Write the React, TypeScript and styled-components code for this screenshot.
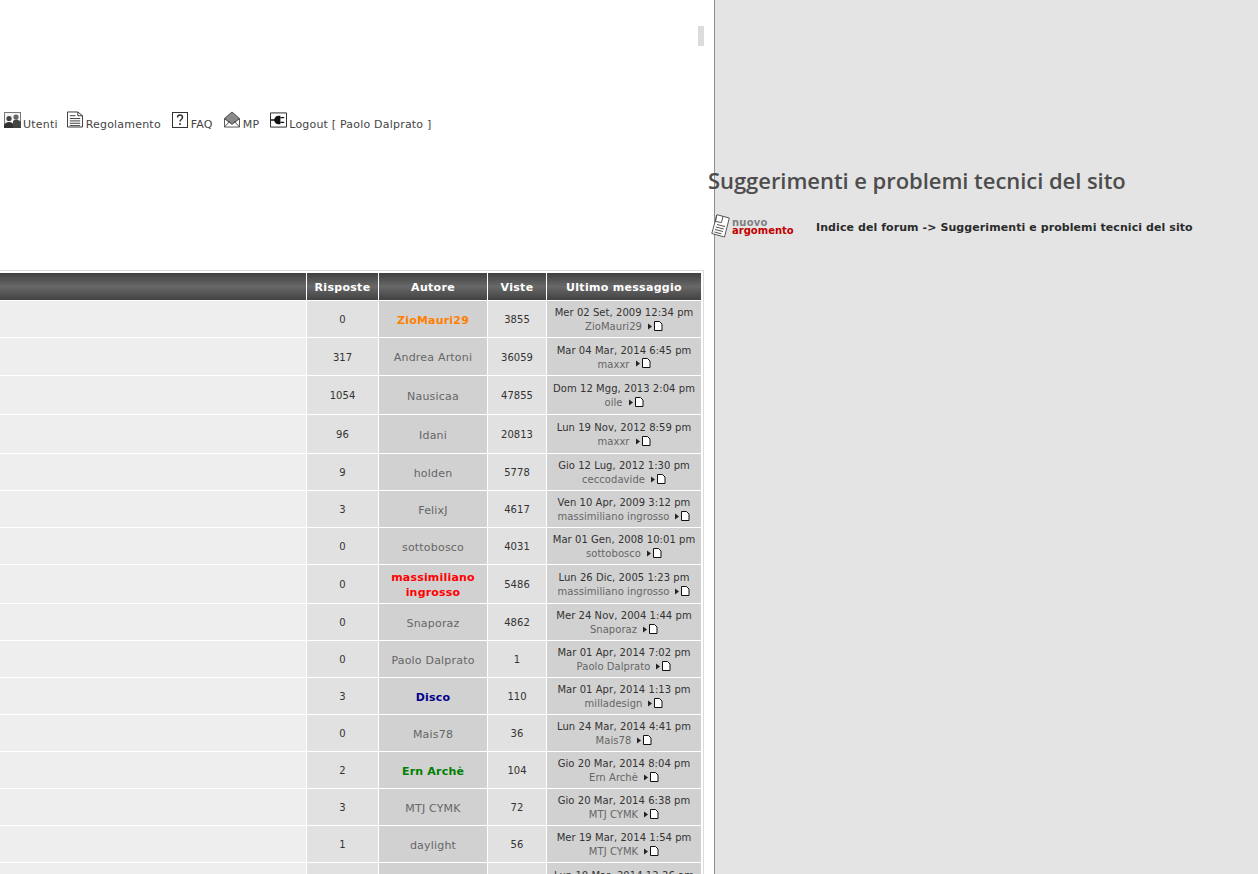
import styled, { createGlobalStyle } from "styled-components";

interface TopicRow {
  replies: number | string;
  author: string;
  authorColor?: string;
  views: number | string;
  date: string;
  lastBy: string;
  height: number;
}

const rows: TopicRow[] = [
  { replies: 0, author: "ZioMauri29", authorColor: "#ff7f00", views: 3855, date: "Mer 02 Set, 2009 12:34 pm", lastBy: "ZioMauri29", height: 36 },
  { replies: 317, author: "Andrea Artoni", views: 36059, date: "Mar 04 Mar, 2014 6:45 pm", lastBy: "maxxr", height: 37 },
  { replies: 1054, author: "Nausicaa", views: 47855, date: "Dom 12 Mgg, 2013 2:04 pm", lastBy: "oile", height: 38 },
  { replies: 96, author: "Idani", views: 20813, date: "Lun 19 Nov, 2012 8:59 pm", lastBy: "maxxr", height: 38 },
  { replies: 9, author: "holden", views: 5778, date: "Gio 12 Lug, 2012 1:30 pm", lastBy: "ceccodavide", height: 36 },
  { replies: 3, author: "FelixJ", views: 4617, date: "Ven 10 Apr, 2009 3:12 pm", lastBy: "massimiliano ingrosso", height: 36 },
  { replies: 0, author: "sottobosco", views: 4031, date: "Mar 01 Gen, 2008 10:01 pm", lastBy: "sottobosco", height: 36 },
  { replies: 0, author: "massimiliano ingrosso", authorColor: "#ff0000", views: 5486, date: "Lun 26 Dic, 2005 1:23 pm", lastBy: "massimiliano ingrosso", height: 38 },
  { replies: 0, author: "Snaporaz", views: 4862, date: "Mer 24 Nov, 2004 1:44 pm", lastBy: "Snaporaz", height: 36 },
  { replies: 0, author: "Paolo Dalprato", views: 1, date: "Mar 01 Apr, 2014 7:02 pm", lastBy: "Paolo Dalprato", height: 36 },
  { replies: 3, author: "Disco", authorColor: "#00008b", views: 110, date: "Mar 01 Apr, 2014 1:13 pm", lastBy: "milladesign", height: 36 },
  { replies: 0, author: "Mais78", views: 36, date: "Lun 24 Mar, 2014 4:41 pm", lastBy: "Mais78", height: 36 },
  { replies: 2, author: "Ern Archè", authorColor: "#008000", views: 104, date: "Gio 20 Mar, 2014 8:04 pm", lastBy: "Ern Archè", height: 36 },
  { replies: 3, author: "MTJ CYMK", views: 72, date: "Gio 20 Mar, 2014 6:38 pm", lastBy: "MTJ CYMK", height: 36 },
  { replies: 1, author: "daylight", views: 56, date: "Mer 19 Mar, 2014 1:54 pm", lastBy: "MTJ CYMK", height: 36 },
  { replies: "", author: "", views: "", date: "Lun 10 Mar, 2014 12:26 am", lastBy: "", height: 36 },
];

const GlobalStyle = createGlobalStyle`
  html, body {
    margin: 0;
    padding: 0;
    height: 874px;
    overflow: hidden;
    background: #e4e4e4;
    font-family: "DejaVu Sans", Verdana, sans-serif;
  }
`;

const Page = styled.div`
  display: flex;
  width: 1258px;
  height: 874px;
  overflow: hidden;
`;

const LeftPanel = styled.div`
  width: 714px;
  height: 874px;
  flex: none;
  background: #fff;
  border-right: 1px solid #8f8f8f;
  overflow: hidden;
`;

const ScrollThumb = styled.div`
  width: 6px;
  height: 20px;
  margin: 26px 0 0 698px;
  background: #dcdcdc;
`;

const NavBar = styled.nav`
  display: flex;
  align-items: flex-end;
  height: 20px;
  margin: 65px 0 0 4px;
`;

const NavItem = styled.a<{ $gap: number; $iconGap: number }>`
  display: flex;
  align-items: flex-end;
  gap: ${({ $iconGap }) => $iconGap}px;
  margin-right: ${({ $gap }) => $gap}px;
  color: #444;
  font-size: 11px;
  letter-spacing: 0.2px;
  line-height: 13px;
  white-space: pre;

  svg {
    margin-bottom: 3px;
  }
`;

const TableFrame = styled.div`
  width: 704px;
  margin-top: 139px;
  padding: 2px 0 0;
  border-top: 1px solid #dcdcdc;
  border-right: 1px solid #dcdcdc;
  box-sizing: border-box;
`;

const Topics = styled.table`
  width: 702px;
  margin-left: -1px;
  table-layout: fixed;
  border-collapse: separate;
  border-spacing: 0;
`;

const HeadCell = styled.th<{ $width?: number }>`
  width: ${({ $width }) => ($width ? `${$width}px` : "auto")};
  height: 26px;
  padding: 1px 0 0;
  box-sizing: content-box;
  border-left: 1px solid #fff;
  border-bottom: 1px solid #fff;
  background: linear-gradient(#404040, #686868 50%, #424242);
  color: #fff;
  font-size: 11px;
  font-weight: bold;
  letter-spacing: 0.3px;
  text-align: center;
`;

const Row = styled.tr<{ $height: number }>`
  height: ${({ $height }) => $height}px;
`;

const Cell = styled.td<{ $shade: string }>`
  padding: 2px 0 0;
  border-left: 1px solid #fff;
  border-bottom: 1px solid #fff;
  background: ${({ $shade }) => $shade};
  color: #333;
  font-size: 10px;
  letter-spacing: 0.05px;
  line-height: 14px;
  text-align: center;
`;

const Author = styled.span<{ $color?: string }>`
  display: block;
  color: ${({ $color }) => $color || "#666"};
  font-size: 11px;
  font-weight: ${({ $color }) => ($color ? "bold" : "normal")};
  line-height: 15px;
  letter-spacing: 0.2px;
  padding: 0 4px;
`;

const LastBy = styled.span`
  display: flex;
  justify-content: center;
  align-items: center;
  gap: 6px;
  color: #666;

  svg {
    margin-bottom: 3px;
  }
`;

const RightPanel = styled.main`
  flex: 1;
  min-width: 0;
`;

const Title = styled.h1`
  margin: 167px 0 0 -7px;
  color: #4d4d4d;
  font-family: "Open Sans", sans-serif;
  font-size: 22px;
  font-weight: 600;
  letter-spacing: -0.05px;
  line-height: 26px;
  white-space: nowrap;
`;

const ActionRow = styled.div`
  display: flex;
  align-items: center;
  margin: 21px 0 0 -4px;
`;

const NewTopic = styled.a`
  display: flex;
  align-items: center;
  gap: 2px;
  width: 105px;
  flex: none;
`;

const NewTopicLabel = styled.span`
  display: flex;
  flex-direction: column;
  padding-top: 1px;
  font-weight: bold;
  font-size: 10px;
  line-height: 8px;
`;

const LabelTop = styled.span`
  color: #808080;
  letter-spacing: 0.2px;
`;

const LabelBottom = styled.span`
  color: #c40000;
`;

const Breadcrumb = styled.div`
  padding-top: 2px;
  color: #2b2b2b;
  font-size: 11px;
  font-weight: bold;
  letter-spacing: 0.08px;
  white-space: nowrap;
`;

const UsersIcon = () => (
  <svg width="17" height="16" viewBox="0 0 17 16">
    <rect x="0.5" y="0.5" width="16" height="15" fill="#f4f4f4" stroke="#777" />
    <circle cx="5" cy="6.500" r="2.600" fill="#444" />
    <circle cx="12" cy="5" r="2.600" fill="#666" />
    <path d="M0 16v-3c1-2 3-3 5-3s4 1 5 3v3z" fill="#333" />
    <path d="M9 9c1-1 2-1.500 3-1.500s3 .5 5 2.500v6H9z" fill="#444" />
  </svg>
);

const RulesIcon = () => (
  <svg width="16" height="17" viewBox="0 0 17 17" fill="none" stroke="#333">
    <path d="M.5.5h11l5 4v12H.5z" fill="#fff" />
    <path d="M11.500.5v4h5M3 4.500h6M3 7.500h11M3 10h11M3 12.500h11M3 15h11" />
  </svg>
);

const FaqIcon = () => (
  <svg width="16" height="16" viewBox="0 0 16 16">
    <rect x="0.5" y="0.500" width="15" height="15" fill="#fff" stroke="#333" />
    <path d="M5.500 5.500c0-3.500 5-3.500 5 0 0 2-2.500 2-2.500 4M8 11v2" fill="none" stroke="#333" strokeWidth="1.500" />
  </svg>
);

const MailIcon = () => (
  <svg width="16" height="17" viewBox="0 0 17 17">
    <path d="M.5 7.500 8.500.5l8 7v9H.5z" fill="#8a8a8a" stroke="#444" />
    <path d="M1 16V8.500l7.500 5.500 7.500-5.500V16z" fill="#fff" />
    <path d="M.5 16.500l5.500-6M16.500 16.500 11 10.500M.5 7.500l8 6 8-6" fill="none" stroke="#444" />
  </svg>
);

const LogoutIcon = () => (
  <svg width="17" height="16" viewBox="0 0 18 16">
    <path d="M.5.5h17v15H.5z" fill="#fff" stroke="#222" />
    <path d="M9 3.500a4.500 4.500 0 0 0 0 9h2v-9z" fill="#111" />
    <path d="M1 8h5M11 5.500h4M11 10.500h4" stroke="#111" strokeWidth="1.500" />
  </svg>
);

const LatestIcon = () => (
  <svg width="15" height="10" viewBox="0 0 15 10">
    <path d="M0 2.500 4 5.500 0 8.500z" fill="#222" />
    <path d="M6.500.5h5l2.500 2.500v6.500H6.500z" fill="#fff" stroke="#111" />
  </svg>
);

const NewTopicIcon = () => (
  <svg width="19" height="24" viewBox="0 0 19 24" fill="none" stroke="#555">
    <path d="M6 .7 18.300 4 13.500 23 .8 19.500z" fill="#fff" />
    <path d="M5.500 1 4.500 7.500l6 1L12 2M6 10.500l8 2M4.800 13l8 2M4 15.500l8 2M3.300 18l7 1.800" />
  </svg>
);

export default function App() {
  return (
    <>
      <GlobalStyle />
      <Page>
        <LeftPanel>
          <ScrollThumb />
          <NavBar>
            <NavItem $gap={9} $iconGap={2}><UsersIcon />Utenti</NavItem>
            <NavItem $gap={11} $iconGap={3}><RulesIcon />Regolamento</NavItem>
            <NavItem $gap={11} $iconGap={3}><FaqIcon />FAQ</NavItem>
            <NavItem $gap={11} $iconGap={3}><MailIcon />MP</NavItem>
            <NavItem $gap={0} $iconGap={2}><LogoutIcon />Logout [ Paolo Dalprato ]</NavItem>
          </NavBar>
          <TableFrame>
            <Topics>
              <thead>
                <tr>
                  <HeadCell />
                  <HeadCell $width={71}>Risposte</HeadCell>
                  <HeadCell $width={108}>Autore</HeadCell>
                  <HeadCell $width={58}>Viste</HeadCell>
                  <HeadCell $width={154}>Ultimo messaggio</HeadCell>
                </tr>
              </thead>
              <tbody>
                {rows.map((row) => (
                  <Row key={row.date} $height={row.height + 1}>
                    <Cell $shade="#eeeeee" />
                    <Cell $shade="#e1e1e1">{row.replies}</Cell>
                    <Cell $shade="#d1d1d1">
                      <Author $color={row.authorColor}>{row.author}</Author>
                    </Cell>
                    <Cell $shade="#e1e1e1">{row.views}</Cell>
                    <Cell $shade="#d1d1d1">
                      {row.date}
                      <LastBy>
                        {row.lastBy}
                        <LatestIcon />
                      </LastBy>
                    </Cell>
                  </Row>
                ))}
              </tbody>
            </Topics>
          </TableFrame>
        </LeftPanel>
        <RightPanel>
          <Title>Suggerimenti e problemi tecnici del sito</Title>
          <ActionRow>
            <NewTopic>
              <NewTopicIcon />
              <NewTopicLabel>
                <LabelTop>nuovo</LabelTop>
                <LabelBottom>argomento</LabelBottom>
              </NewTopicLabel>
            </NewTopic>
            <Breadcrumb>Indice del forum -&gt; Suggerimenti e problemi tecnici del sito</Breadcrumb>
          </ActionRow>
        </RightPanel>
      </Page>
    </>
  );
}
